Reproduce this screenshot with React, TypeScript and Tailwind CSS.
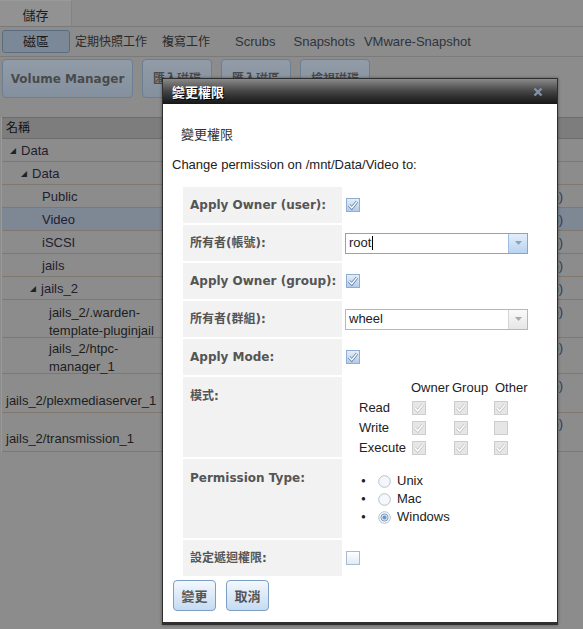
import React from "react";

type BoxProps = { checked?: boolean; disabled?: boolean };

function CheckBox({ checked, disabled }: BoxProps) {
    const border = disabled ? "#cdcdcd" : checked ? "#8eadd0" : "#a9bbd0";
    const fill = disabled ? "#e6e6e6" : checked ? "url(#cbOn)" : "url(#cbOff)";
    return (
        <svg width="14" height="14" viewBox="0 0 14 14" className="block shrink-0">
            <defs>
                <linearGradient id="cbOn" x1="0" y1="0" x2="0" y2="1">
                    <stop offset="0" stopColor="#e6effa" />
                    <stop offset="1" stopColor="#b1cbe9" />
                </linearGradient>
                <linearGradient id="cbOff" x1="0" y1="0" x2="0" y2="1">
                    <stop offset="0" stopColor="#ffffff" />
                    <stop offset="1" stopColor="#e1eaf5" />
                </linearGradient>
            </defs>
            <rect x="0.5" y="0.5" width="13" height="13" fill={fill} stroke={border} />
            {checked && (
                <>
                    <path d="M3 7.2 L5.8 10 L11 3.6" fill="none" stroke={disabled ? "#c4c4c4" : "#5f81aa"} strokeWidth="3" />
                    <path d="M3 7.2 L5.8 10 L11 3.6" fill="none" stroke="#ffffff" strokeWidth="1.5" />
                </>
            )}
        </svg>
    );
}

function Radio({ checked }: { checked?: boolean }) {
    return (
        <svg width="13" height="13" viewBox="0 0 13 13" className="block shrink-0">
            <circle cx="6.5" cy="6.5" r="5.8" fill="#f4f7fb" stroke="#b3c2d4" />
            {checked && (
                <>
                    <circle cx="6.5" cy="6.5" r="3.6" fill="#dbe8f6" stroke="#7d9ec4" />
                    <circle cx="6.5" cy="6.5" r="2" fill="#6f95c2" />
                </>
            )}
        </svg>
    );
}

function Label({ children, top }: { children: React.ReactNode; top?: boolean }) {
    return (
        <div
            className={`bg-[#f2f2f2] pl-[7px] font-['DejaVu_Sans','Noto_Sans_CJK_TC',sans-serif] text-[12px] font-bold leading-[14px] text-[#555] ${top ? "pt-[12px]" : "flex items-center"}`}
        >
            {children}
        </div>
    );
}

const tree = [
    { name: "Data", pad: "pl-[8px]", arrow: true, h: "h-[23px]" },
    { name: "Data", pad: "pl-[19px]", arrow: true, h: "h-[23px]" },
    { name: "Public", pad: "pl-[40px]", h: "h-[23px]", right: true },
    { name: "Video", pad: "pl-[40px]", h: "h-[23px]", right: true, sel: true },
    { name: "iSCSI", pad: "pl-[40px]", h: "h-[23px]", right: true },
    { name: "jails", pad: "pl-[40px]", h: "h-[23px]", right: true },
    { name: "jails_2", pad: "pl-[28px]", arrow: true, h: "h-[23px]", right: true },
];

export default function App() {
    return (
        <div className="relative h-[629px] w-[583px] overflow-hidden bg-[#8c8c8c] font-['Liberation_Sans','Noto_Sans_CJK_TC',sans-serif] text-[13px] text-[#1d1d1d]">
            {/* page behind the dialog */}
            <div className="flex h-[27px] border-b border-[#7a7a7a] bg-[#8d8d8d]">
                <div className="flex w-[72px] justify-center border-r border-t border-[#9a9a9a] border-r-[#838383] bg-[#929292] pt-[5px] text-[13px]">
                    儲存
                </div>
            </div>
            <div className="flex h-[30px] items-center border-b border-[#7b7b7b]">
                <div className="ml-[2px] flex h-[23px] w-[68px] items-center justify-center rounded-[3px] border border-[#5b6c80] bg-[#7b8897] text-[13px]">
                    磁區
                </div>
                <span className="ml-[5px] text-[12px] text-[#2a2a2a]">定期快照工作</span>
                <span className="ml-[15px] text-[12px] text-[#2a2a2a]">複寫工作</span>
                <span className="ml-[25px] text-[#2c3440]">Scrubs</span>
                <span className="ml-[18px] text-[#2c3440]">Snapshots</span>
                <span className="ml-[9px] text-[#2c3440]">VMware-Snapshot</span>
            </div>
            <div className="mt-[2px] flex h-[39px] gap-[9px] pl-[2px]">
                {["Volume Manager", "匯入磁碟", "匯入磁區", "檢視磁碟"].map((b, i) => (
                    <div
                        key={b}
                        className={`flex items-center justify-center rounded-[4px] border border-[#6b7e93] bg-gradient-to-b from-[#929ca8] to-[#84909e] font-['DejaVu_Sans','Noto_Sans_CJK_TC',sans-serif] text-[12px] font-bold text-[#4a4a4a] ${i === 0 ? "w-[131px]" : "w-[70px]"}`}
                    >
                        {b}
                    </div>
                ))}
            </div>

            <div className="mt-[19px] ml-[1px] border-l border-[#9a9a9a]">
                <div className="flex h-[22px] items-center border-y border-[#6d6d6d] bg-[#7d7d7d] pl-[4px] text-[12px] text-[#111]">
                    名稱
                </div>
                {tree.map((r, i) => (
                    <div
                        key={i}
                        className={`flex ${r.h} border-b border-[#80776f] ${r.sel ? "bg-[#7e8794]" : ""}`}
                    >
                        <div className={`mt-[3px] flex h-[17px] w-[175px] items-center ${r.pad} text-[#1e2030]`}>
                            {r.arrow && <span className="mr-[5px] text-[6px] leading-none text-[#222]">◢</span>}
                            <span>{r.name}</span>
                        </div>
                        <div className="flex-1 pt-[3px] pr-[20px] text-right leading-[17px] text-[#2b3c60]">
                            {r.right ? "0 (0%)" : ""}
                        </div>
                    </div>
                ))}
                <div className="flex h-[38px] border-b border-[#80776f]">
                    <div className="w-[175px] pl-[47px] pt-[4px] leading-[18px]">
                        jails_2/.warden-
                        <br />
                        template-pluginjail
                    </div>
                    <div className="flex-1 pt-[3px] pr-[20px] text-right leading-[17px] text-[#2b3c60]">0 (0%)</div>
                </div>
                <div className="flex h-[36px] border-b border-[#80776f]">
                    <div className="w-[175px] pl-[47px] pt-[2px] leading-[18px]">
                        jails_2/htpc-
                        <br />
                        manager_1
                    </div>
                    <div className="flex-1 pt-[1px] pr-[20px] text-right leading-[17px] text-[#2b3c60]">0 (0%)</div>
                </div>
                <div className="flex h-[39px] border-b border-[#80776f]">
                    <div className="w-[175px] pl-[4px] pt-[18px] leading-[18px]">jails_2/plexmediaserver_1</div>
                    <div className="flex-1 pt-[3px] pr-[20px] text-right leading-[17px] text-[#2b3c60]">0 (0%)</div>
                </div>
                <div className="flex h-[39px] border-b border-[#80776f]">
                    <div className="w-[175px] pl-[4px] pt-[17px] leading-[18px]">jails_2/transmission_1</div>
                    <div className="flex-1 pt-[2px] pr-[20px] text-right leading-[17px] text-[#2b3c60]">0 (0%)</div>
                </div>
            </div>

            {/* dialog */}
            <div className="absolute left-[162px] top-[78px] flex h-[547px] w-[396px] flex-col border border-[#2e2e2e] border-b-[3px] shadow-[0_0_3px_rgba(0,0,0,0.4)]">
                <div className="flex h-[25px] items-center justify-between bg-gradient-to-b from-[#8a8a8a] via-[#444] to-[#161616] pl-[9px] pr-[14px]">
                    <span className="font-['Noto_Sans_CJK_TC',sans-serif] text-[13px] font-bold text-white [text-shadow:1px_1px_0_#000]">
                        變更權限
                    </span>
                    <svg width="10" height="10" viewBox="0 0 10 10">
                        <path d="M1.5 1.5 L8.5 8.5 M8.5 1.5 L1.5 8.5" stroke="#7f93aa" strokeWidth="2.4" />
                    </svg>
                </div>
                <div className="flex flex-1 flex-col bg-white text-[#333]">
                    <p className="ml-[18px] mt-[23px] text-[13px] leading-[16px]">變更權限</p>
                    <p className="ml-[9px] mt-[14px] text-[13px] leading-[16px] text-[#222]">
                        Change permission on /mnt/Data/Video to:
                    </p>

                    <div className="ml-[20px] mt-[14px] grid grid-cols-[159px_197px] gap-x-[1px] gap-y-[2px] [grid-template-rows:36px_36px_36px_36px_36px_80px_79px_36px]">
                        <Label>Apply Owner (user):</Label>
                        <div className="flex items-center pl-[3px]">
                            <CheckBox checked />
                        </div>

                        <Label>所有者(帳號):</Label>
                        <div className="flex items-center pl-[2px]">
                            <div className="flex h-[21px] w-[183px] border border-[#7ea7d3] bg-white">
                                <div className="flex flex-1 items-center pl-[3px] text-[13px] text-[#222]">
                                    root<span className="ml-[1px] inline-block h-[14px] w-px bg-black" />
                                </div>
                                <div className="flex w-[19px] items-center justify-center border-l border-[#9fbde0] bg-gradient-to-b from-[#e3eefb] to-[#b9d3f0]">
                                    <svg width="7" height="4" viewBox="0 0 7 4">
                                        <path d="M0 0 H7 L3.5 4 Z" fill="#8aa3c2" />
                                    </svg>
                                </div>
                            </div>
                        </div>

                        <Label>Apply Owner (group):</Label>
                        <div className="flex items-center pl-[3px]">
                            <CheckBox checked />
                        </div>

                        <Label>所有者(群組):</Label>
                        <div className="flex items-center pl-[2px]">
                            <div className="flex h-[21px] w-[183px] border border-[#b7b7b7] bg-white">
                                <div className="flex flex-1 items-center pl-[3px] text-[13px] text-[#222]">wheel</div>
                                <div className="flex w-[19px] items-center justify-center border-l border-[#d5d5d5] bg-gradient-to-b from-[#fafafa] to-[#e6e6e6]">
                                    <svg width="7" height="4" viewBox="0 0 7 4">
                                        <path d="M0 0 H7 L3.5 4 Z" fill="#a9a9a9" />
                                    </svg>
                                </div>
                            </div>
                        </div>

                        <Label>Apply Mode:</Label>
                        <div className="flex items-center pl-[3px]">
                            <CheckBox checked />
                        </div>

                        <Label top>模式:</Label>
                        <div className="pl-[15px] pt-[1px]">
                            <div className="grid grid-cols-[52px_41px_42px_40px] auto-rows-[20px] items-center text-[13px] text-[#222]">
                                <span />
                                <span className="pl-[1px]">Owner</span>
                                <span className="pl-[1px]">Group</span>
                                <span className="pl-[2px]">Other</span>
                                {[
                                    ["Read", true, true, true],
                                    ["Write", true, true, false],
                                    ["Execute", true, true, true],
                                ].map(([label, a, b, c]) => (
                                    <React.Fragment key={label as string}>
                                        <span className="pl-[1px]">{label}</span>
                                        <span className="pl-[2px]">
                                            <CheckBox disabled checked={a as boolean} />
                                        </span>
                                        <span className="pl-[3px]">
                                            <CheckBox disabled checked={b as boolean} />
                                        </span>
                                        <span className="pl-[1px]">
                                            <CheckBox disabled checked={c as boolean} />
                                        </span>
                                    </React.Fragment>
                                ))}
                            </div>
                        </div>

                        <Label top>Permission Type:</Label>
                        <div className="flex flex-col pl-[18px] pt-[13px] text-[13px] text-[#222]">
                            {[
                                ["Unix", false],
                                ["Mac", false],
                                ["Windows", true],
                            ].map(([t, on]) => (
                                <div key={t as string} className="flex h-[18px] items-center">
                                    <span className="w-[17px] text-[8px] leading-none">●</span>
                                    <Radio checked={on as boolean} />
                                    <span className="ml-[6px]">{t}</span>
                                </div>
                            ))}
                        </div>

                        <Label>設定遞迴權限:</Label>
                        <div className="flex items-center pl-[3px]">
                            <CheckBox />
                        </div>
                    </div>

                    <div className="ml-[10px] mt-[4px] flex gap-[10px]">
                        {["變更", "取消"].map((b) => (
                            <div
                                key={b}
                                className="flex h-[31px] w-[43px] items-center justify-center rounded-[4px] border border-[#7e9fc4] bg-gradient-to-b from-[#f3f8fd] to-[#c5dbf2] font-['Noto_Sans_CJK_TC',sans-serif] text-[13px] font-bold text-[#555]"
                            >
                                {b}
                            </div>
                        ))}
                    </div>
                </div>
            </div>
        </div>
    );
}
